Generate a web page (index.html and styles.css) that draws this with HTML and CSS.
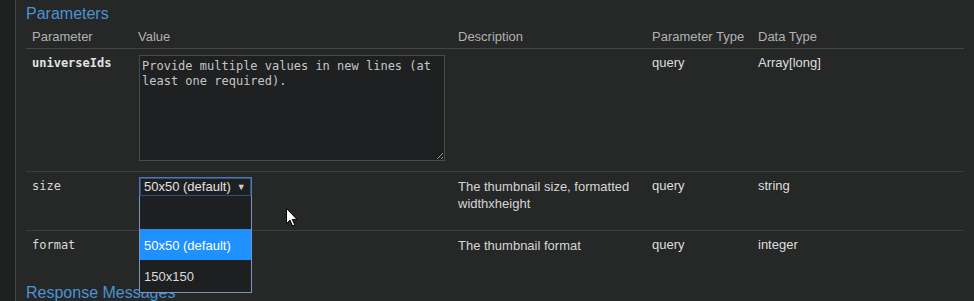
FILE: index.html
```html
<!DOCTYPE html>
<html lang="en">
<head>
<meta charset="utf-8">
<title>Parameters</title>
<link rel="stylesheet" href="styles.css">
</head>
<body>
<div class="page">
  <aside class="rail"></aside>
  <main class="content">
    <h3 class="section-title">Parameters</h3>
    <table class="params">
      <colgroup>
        <col class="c-name"><col class="c-value"><col class="c-desc"><col class="c-ptype"><col class="c-dtype">
      </colgroup>
      <thead>
        <tr>
          <th>Parameter</th>
          <th>Value</th>
          <th>Description</th>
          <th>Parameter Type</th>
          <th>Data Type</th>
        </tr>
      </thead>
      <tbody>
        <tr>
          <td class="code required">universeIds</td>
          <td><textarea class="body-textarea" placeholder="Provide multiple values in new lines (at least one required)."></textarea></td>
          <td></td>
          <td>query</td>
          <td>Array[long]</td>
        </tr>
        <tr>
          <td class="code">size</td>
          <td>
            <div class="select-wrap">
              <div class="select">50x50 (default)<span class="caret">&#9660;</span></div>
              <ul class="dropdown">
                <li class="opt"></li>
                <li class="opt active">50x50 (default)</li>
                <li class="opt">150x150</li>
              </ul>
            </div>
          </td>
          <td><p class="desc">The thumbnail size, formatted widthxheight</p></td>
          <td>query</td>
          <td>string</td>
        </tr>
        <tr class="last">
          <td class="code">format</td>
          <td></td>
          <td><p class="desc">The thumbnail format</p></td>
          <td>query</td>
          <td>integer</td>
        </tr>
      </tbody>
    </table>
    <h3 class="section-title">Response Messages</h3>
  </main>
</div>
<svg class="cursor" width="12" height="19" viewBox="0 0 12 19" aria-hidden="true">
  <path d="M0.5 0.5 L0.5 15.5 L4 12.2 L6.6 18 L8.8 17 L6.3 11.4 L11 11.4 Z" fill="#fff" stroke="#000" stroke-width="1" stroke-linejoin="miter"/>
</svg>
</body>
</html>
```

FILE: styles.css
```css
html, body {
  margin: 0;
  padding: 0;
  background: #262727;
  height: 100%;
  overflow: hidden;
}

body {
  font-family: "Liberation Sans", Arial, sans-serif;
  font-size: 13px;
  color: #dcdcdc;
  position: relative;
}

.page {
  display: flex;
  min-height: 301px;
}

.rail {
  width: 15px;
  flex: 0 0 15px;
  background: #1f2020;
  border-right: 1px solid #3a4753;
}

.content {
  flex: 1;
  padding: 0 10px 0 10px;
}

.section-title {
  margin: 5px 0 0 0;
  font-size: 16px;
  line-height: 18px;
  font-weight: normal;
  color: #4a93d4;
}

.params {
  width: 938px;
  border-collapse: collapse;
  table-layout: fixed;
  margin-bottom: 12px;
}

.c-name { width: 106px; }
.c-value { width: 320px; }
.c-desc { width: 194px; }
.c-ptype { width: 106px; }
.c-dtype { width: 212px; }

.params th {
  text-align: left;
  font-weight: normal;
  color: #b2b2b2;
  line-height: 16px;
  padding: 6px 6px 3px 6px;
  border-bottom: 1px solid #454646;
}

.params td {
  vertical-align: top;
  line-height: 16px;
  padding: 6px 6px 10px 6px;
  border-bottom: 1px solid #3c3d3d;
  color: #dedede;
}

.params tr.last td {
  border-bottom: none;
}

.params td.code {
  font-family: "DejaVu Sans Mono", Consolas, monospace;
  font-size: 12px;
  color: #d8d8d8;
}

.params td.required {
  font-weight: bold;
  color: #e2e2e2;
}

.body-textarea {
  display: block;
  box-sizing: border-box;
  width: 306px;
  height: 106px;
  margin: 0 0 0 1px;
  padding: 3px 2px;
  background: #1f2021;
  border: 1px solid #4a4a4a;
  font-family: "DejaVu Sans Mono", Consolas, monospace;
  font-size: 12px;
  line-height: 15px;
  color: #cfcfcf;
  resize: both;
  outline: none;
}

.body-textarea::placeholder {
  color: #c6c6c6;
  opacity: 1;
}

.desc {
  margin: 0 0 8px 0;
  line-height: 17px;
  color: #d6d6d6;
}

.select-wrap {
  position: relative;
  margin-left: 1px;
  width: 113px;
}

.select {
  box-sizing: border-box;
  height: 20px;
  width: 113px;
  margin-top: -1px;
  padding: 0 0 0 4px;
  border: 1px solid #4f76b0;
  box-shadow: inset 0 0 0 1px #34507a;
  background: #1e1f20;
  color: #e2e2e2;
  line-height: 18px;
  display: flex;
  align-items: center;
  gap: 6px;
  white-space: nowrap;
}

.caret {
  font-size: 9px;
  color: #cfcfcf;
}

.dropdown {
  position: absolute;
  top: 19px;
  left: 0;
  box-sizing: border-box;
  width: 113px;
  margin: 0;
  padding: 0;
  list-style: none;
  background: #1e1f20;
  border: 1px solid #7a95bb;
  border-top: none;
  z-index: 5;
}

.opt {
  height: 32px;
  line-height: 34px;
  padding-left: 4px;
  color: #dcdcdc;
  white-space: nowrap;
}

.opt:first-child {
  height: 33px;
}

.opt.active {
  background: #1e90ff;
  color: #ffffff;
  height: 31px;
  line-height: 33px;
}

.content > .section-title:last-child {
  margin-top: 0;
}

.cursor {
  position: absolute;
  left: 286px;
  top: 208px;
  z-index: 10;
}
```
